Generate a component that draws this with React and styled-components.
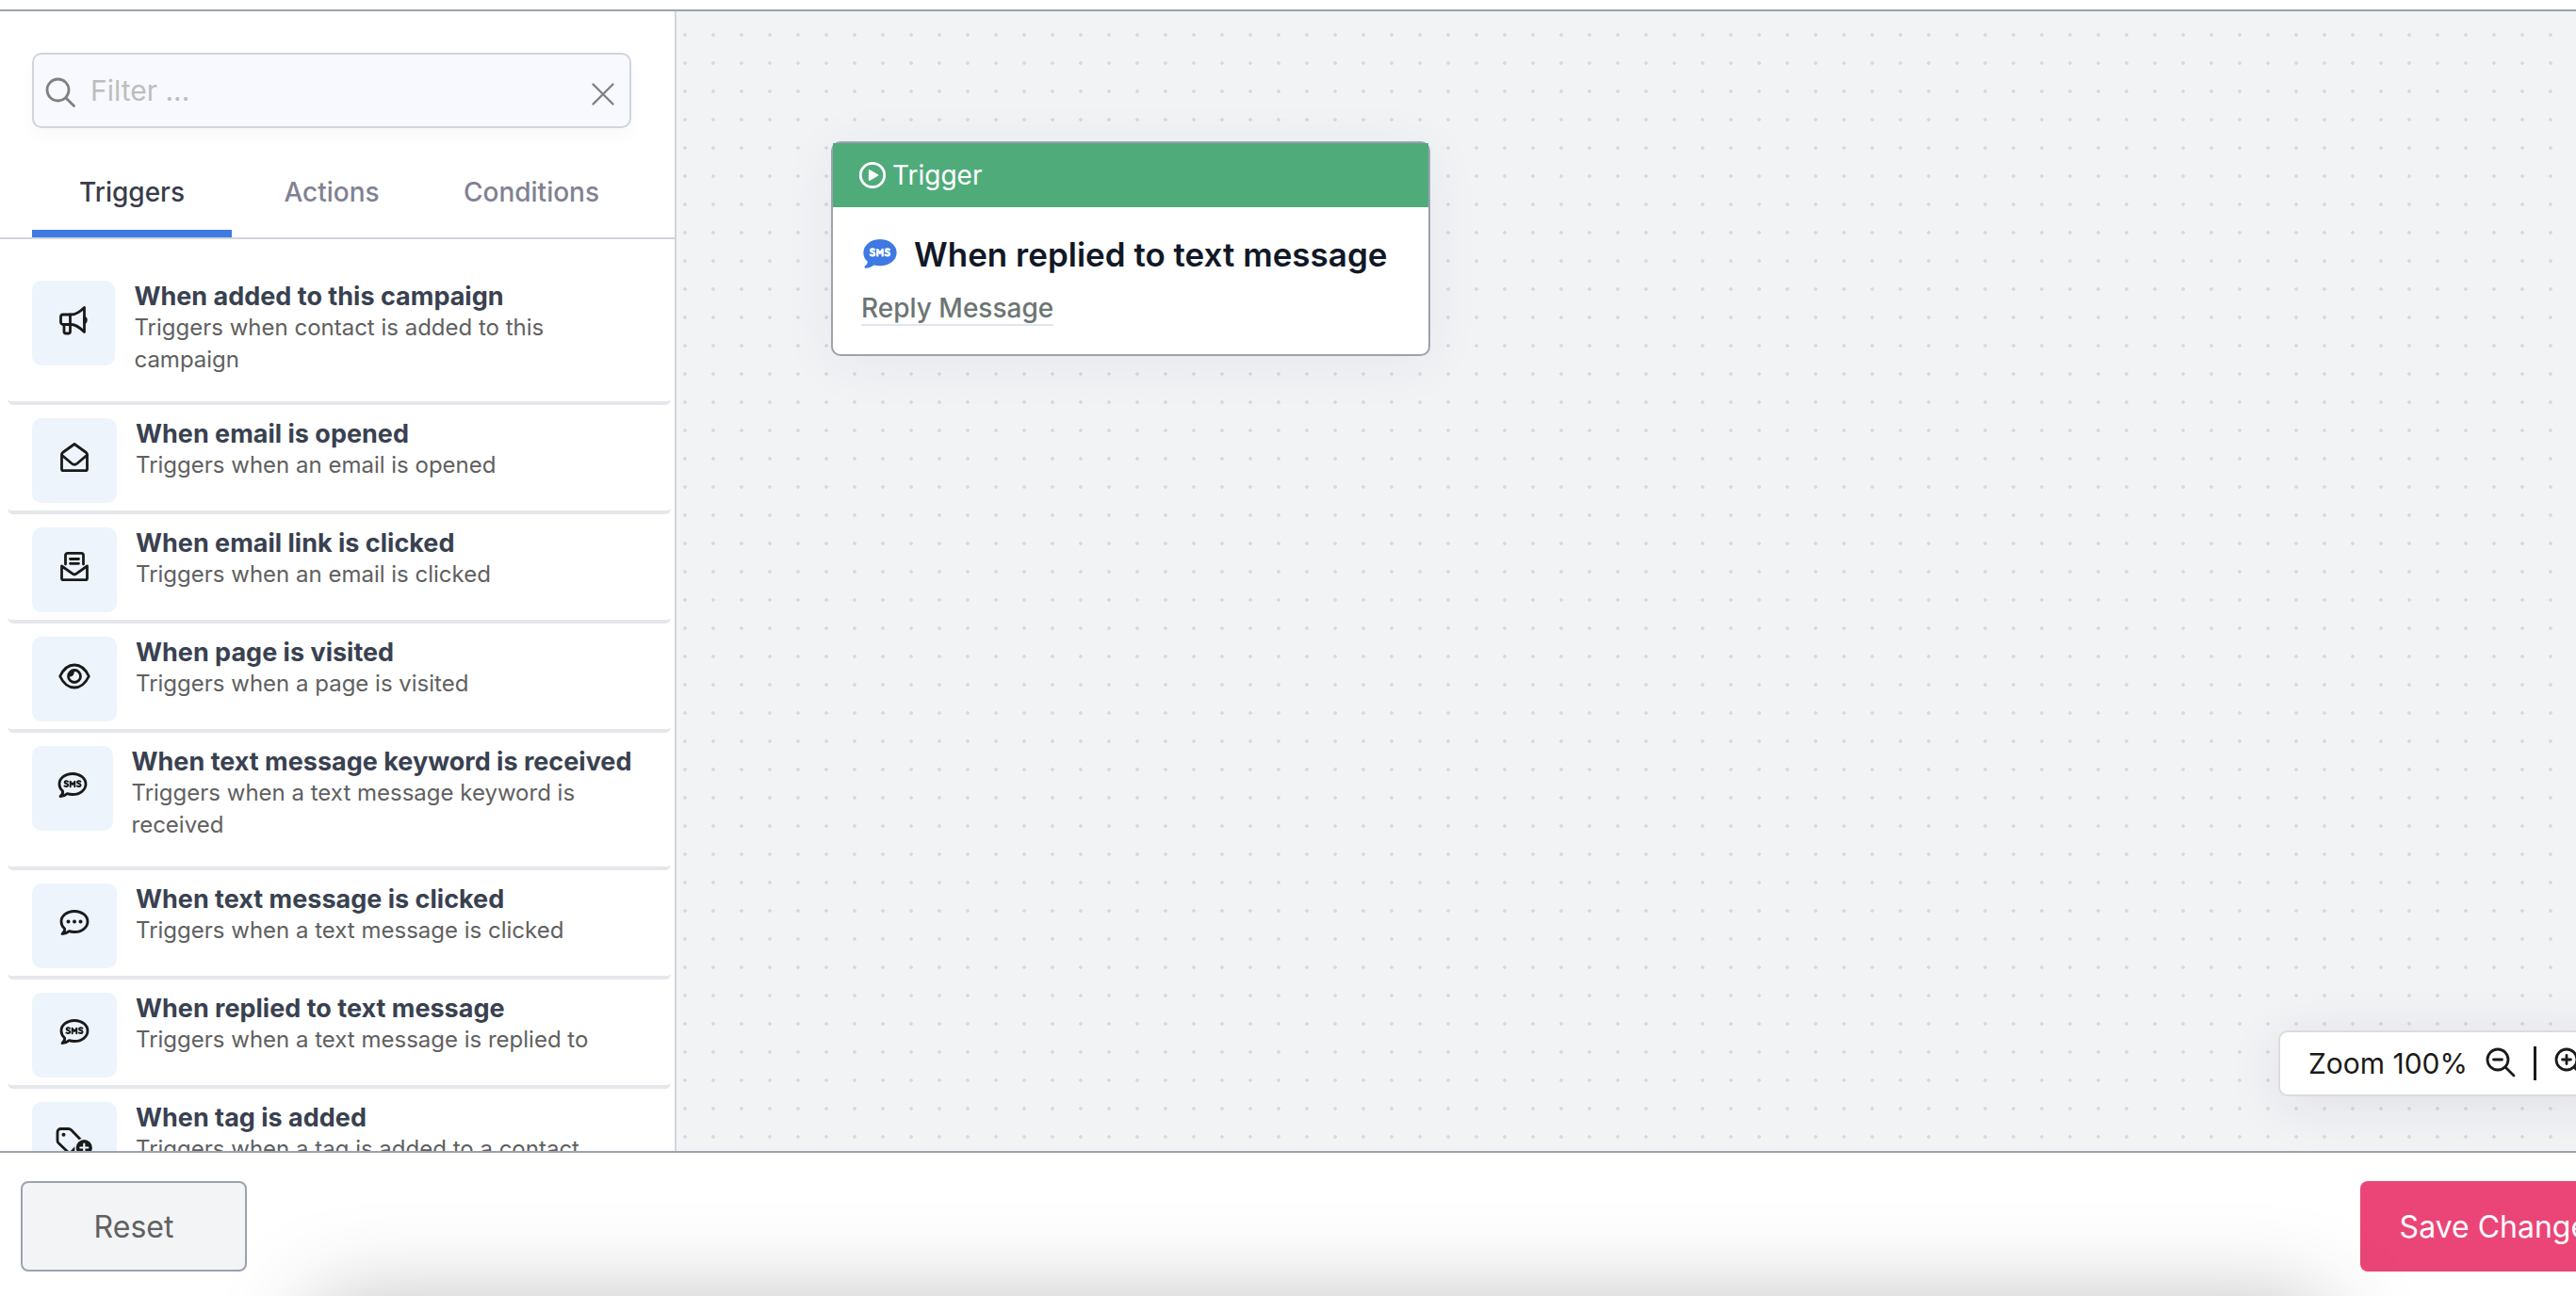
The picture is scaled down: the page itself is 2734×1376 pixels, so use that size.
import React, { useState } from 'react';
import styled, { createGlobalStyle, css } from 'styled-components';

const GlobalStyle = createGlobalStyle`
  *, *::before, *::after {
    box-sizing: border-box;
  }

  body {
    margin: 0;
    overflow: hidden;
    background: #fff;
    font-family: Inter, 'Liberation Sans', sans-serif;
  }

  button, input {
    font-family: inherit;
  }
`;

const Page = styled.div`
  display: flex;
  flex-direction: column;
  width: calc(100vw + 94px);
  height: 100vh;
  padding-top: 10px;
`;

const Workspace = styled.div`
  display: flex;
  flex: 1;
  min-height: 0;
  border-top: 2px solid #9ca3af;
  border-bottom: 2px solid #9ca3af;
`;

const Sidebar = styled.aside`
  display: flex;
  flex-direction: column;
  flex: none;
  width: 718px;
  border-right: 2px solid #d1d5db;
  overflow: hidden;
`;

const FilterBox = styled.label`
  display: flex;
  align-items: center;
  flex: none;
  height: 80px;
  margin: 44px 46px 0 34px;
  padding: 0 16px 0 12px;
  gap: 16px;
  border: 2px solid #d1d5db;
  border-radius: 10px;
  background: #f7f9fe;
  box-shadow: 0 8px 16px rgba(0, 0, 0, 0.03);
  color: #808080;

  > svg {
    margin-top: 4px;
  }
`;

const FilterInput = styled.input`
  flex: 1;
  min-width: 0;
  padding: 0;
  border: 0;
  outline: 0;
  background: transparent;
  color: #394150;
  font-size: 30px;

  &::placeholder {
    color: #bdbdbd;
    opacity: 1;
  }
`;

const ClearButton = styled.button`
  display: flex;
  padding: 8px 0 0;
  border: 0;
  background: transparent;
  color: #808080;
`;

const Tabs = styled.div`
  display: flex;
  flex: none;
  height: 118px;
  padding: 20px 46px 0 34px;
  border-bottom: 2px solid #d1d5db;
`;

const Tab = styled.button`
  flex: 1;
  padding: 8px 0 0;
  border: 0;
  border-bottom: 8px solid ${({ $active }) => ($active ? '#3f7ae3' : 'transparent')};
  background: transparent;
  color: ${({ $active }) => ($active ? '#393c4a' : '#808292')};
  font-size: 28px;
  font-weight: 500;
`;

const BlockList = styled.ul`
  flex: 1;
  min-height: 0;
  margin: 0;
  padding: 30px 4px 0 8px;
  overflow: hidden;
  list-style: none;
`;

const Block = styled.li`
  display: flex;
  align-items: flex-start;
  padding: 14px 26px 8px;
  border-bottom: 4px solid #e5e7eb;
  border-radius: 6px;
`;

const BlockIcon = styled.div`
  display: flex;
  justify-content: center;
  width: 90px;
  height: 90px;
  padding-top: 25px;
  border-radius: 10px;
  background: #edf4fc;
  color: #1a1a1a;
`;

const BlockText = styled.div`
  margin-left: 20px;
  padding-bottom: 19px;
`;

const BlockTitle = styled.h3`
  margin: 0;
  color: #394150;
  font-size: 27px;
  font-weight: 700;
  line-height: 33px;
`;

const BlockDescription = styled.p`
  margin: 0;
  color: #606060;
  font-size: 24px;
  line-height: 34px;
`;

const Canvas = styled.main`
  position: relative;
  flex: 1;
  overflow: hidden;
  background-color: #f2f3f5;
  background-image: radial-gradient(circle, #d9dbde 2px, transparent 2px);
  background-size: 30px 30px;
  background-position: -6px 10px;
`;

const Node = styled.article`
  position: absolute;
  top: 138px;
  left: 164px;
  border: 2px solid #9ca3af;
  border-radius: 10px;
  background: #fff;
  box-shadow: 0 8px 60px rgba(30, 50, 100, 0.06);
`;

const NodeHeader = styled.header`
  display: flex;
  align-items: center;
  gap: 6px;
  height: 68px;
  padding: 0 27px;
  background: #50ab7b;
  color: #fff;
  font-size: 28px;
`;

const NodeBody = styled.div`
  width: 632px;
  padding: 28px 30px 30px;
`;

const NodeTitle = styled.h2`
  display: flex;
  align-items: center;
  gap: 16px;
  margin: 0;
  color: #111827;
  font-size: 35px;
  font-weight: 600;
  line-height: 44px;
  white-space: nowrap;

  svg {
    flex: none;
    color: #3f7ae3;
  }
`;

const NodeLink = styled.a`
  display: inline-block;
  margin-top: 18px;
  border-bottom: 2px solid #e2e4f0;
  color: #6b7573;
  font-size: 28px;
  font-weight: 500;
  line-height: 34px;
  text-decoration: none;
`;

const ZoomBar = styled.div`
  position: absolute;
  right: 53px;
  bottom: 58px;
  display: flex;
  align-items: center;
  height: 70px;
  padding: 0 30px;
  gap: 19px;
  border: 2px solid #dcdcdc;
  border-radius: 10px;
  background: #fff;
  box-shadow: 0 8px 60px rgba(30, 30, 90, 0.09);
  color: #1a1a1a;
  font-size: 30px;
`;

const ZoomButton = styled.button`
  display: flex;
  padding: 0 0 2px;
  border: 0;
  background: transparent;
  color: inherit;
`;

const Divider = styled.span`
  width: 3px;
  height: 36px;
  background: #1a1a1a;
`;

const Footer = styled.footer`
  position: relative;
  display: flex;
  justify-content: space-between;
  flex: none;
  height: 152px;
  padding: 30px 22px 0;
  overflow: hidden;

  &::after {
    content: '';
    position: absolute;
    top: 100%;
    left: 335px;
    right: 363px;
    height: 300px;
    box-shadow: 0 10px 96px rgba(0, 0, 0, 0.28);
    pointer-events: none;
  }
`;

const footerButton = css`
  height: 96px;
  border-radius: 8px;
  font-size: 32px;
`;

const ResetButton = styled.button`
  ${footerButton}
  width: 240px;
  border: 2px solid #9ca3af;
  background: #f3f4f6;
  color: #606060;
`;

const SaveButton = styled.button`
  ${footerButton}
  padding: 0 42px;
  border: 0;
  background: #eb4577;
  color: #fff;
`;

const Icon = ({ size = 36, box = 16, children, ...rest }) => (
  <svg width={size} height={size} viewBox={`0 0 ${box} ${box}`} fill="none" stroke="currentColor" strokeLinecap="round" strokeLinejoin="round" aria-hidden="true" {...rest}>
    {children}
  </svg>
);

const BUBBLE = 'M4 28.500 C6 27 7 25 6.600 23 C4.200 21 3 18.400 3 15.500 C3 9.400 9 4.500 17 4.500 S31 9.400 31 15.500 S25 26.500 17 26.500 C15 26.500 13 26.200 11.400 25.600 C9.500 27.200 7 28.500 4 28.500Z';

// hand-drawn lettering strokes inside the speech bubble
const SmsMarks = ({ color = 'currentColor' }) => (
  <g stroke={color} strokeWidth="2">
    <path d="M12 12.800c-1-.8-3.400-.7-3.400.8 0 1.800 3.600 1.100 3.600 3.100 0 1.600-2.500 1.800-3.800.8" />
    <path d="M14.700 18.200v-5.400l2.300 3.200 2.300-3.200v5.400" />
    <path d="M25.400 12.800c-1-.8-3.400-.7-3.400.8 0 1.800 3.600 1.100 3.600 3.100 0 1.600-2.500 1.800-3.800.8" />
  </g>
);

const SmsIcon = () => (
  <Icon size={34} box={34}>
    <path d={BUBBLE} strokeWidth="2.800" />
    <SmsMarks />
  </Icon>
);

const SmsSolidIcon = () => (
  <Icon size={40} box={34}>
    <path d={BUBBLE} fill="currentColor" strokeWidth="2" />
    <SmsMarks color="#fff" />
  </Icon>
);

const ChatIcon = () => (
  <Icon size={34} box={34}>
    <path d={BUBBLE} strokeWidth="2.800" />
    <g fill="currentColor" stroke="none">
      <circle cx="10.500" cy="15.500" r="2" />
      <circle cx="17" cy="15.500" r="2" />
      <circle cx="23.500" cy="15.500" r="2" />
    </g>
  </Icon>
);

const MegaphoneIcon = () => (
  <Icon size={34} box={34} strokeWidth="2.800">
    <path d="M6 11h8.500c5.500 0 10-3.500 14-7.500v26c-4-4-8.500-8-14-8H6a2.500 2.500 0 0 1-2.500-2.500v-5.500A2.500 2.500 0 0 1 6 11Z" />
    <path d="M13.500 11v10.500M7 21.500V29a2 2 0 0 0 2 2h2.500a2 2 0 0 0 2-2v-7.500" />
    <path d="M28.500 14c2.400.6 2.400 5 0 5.600Z" fill="currentColor" />
  </Icon>
);

const MailOpenIcon = () => (
  <Icon size={34} box={34} strokeWidth="2.800">
    <path d="M3.500 13.500c0-.8.400-1.500 1-2L17 2.500l12.500 9c.6.500 1 1.200 1 2V29a1.700 1.700 0 0 1-1.700 1.700H5.200A1.700 1.700 0 0 1 3.500 29Z" />
    <path d="m4 14.500 10 8.500c2 1.700 4 1.700 6 0l10-8.500" />
  </Icon>
);

const MailTextIcon = () => (
  <Icon size={34} box={34} strokeWidth="2.800">
    <path d="M3.500 16v13a1.700 1.700 0 0 0 1.700 1.700h23.600a1.700 1.700 0 0 0 1.700-1.700V16L19 24.200c-1.300 1-2.700 1-4 0L3.500 16Z" />
    <path d="M7.500 14V4.500A2.200 2.200 0 0 1 9.700 2.300h14.600a2.200 2.200 0 0 1 2.200 2.200V14M12.500 8.500h9M12.500 13.300h9" />
  </Icon>
);

const EyeIcon = () => (
  <Icon size={34} box={34} strokeWidth="2.800">
    <path d="M1.700 17C5 10 10.500 5 17 5s12 5 15.300 12C29 24 23.500 29 17 29S5 24 1.700 17Z" />
    <circle cx="17" cy="17" r="6.500" />
    <path d="M17 10.500c-3 0-6 2.500-6.500 6.500 3.500 1.500 6.500-1 6.500-6.500Z" fill="currentColor" stroke="none" />
  </Icon>
);

const TagAddIcon = () => (
  <Icon size={40} box={40} strokeWidth="2.800">
    <path d="M2 7A3.500 3.500 0 0 1 5.500 3.500h8.300c1 0 2 .4 2.600 1.100L28 16.500 15 30 3 18.500c-.7-.7-1-1.600-1-2.500Z" />
    <circle cx="8.500" cy="9.800" r="2" fill="currentColor" stroke="none" />
    <circle cx="30.300" cy="23.500" r="9.300" fill="currentColor" stroke="#edf4fc" strokeWidth="1.500" />
    <path d="M30.300 19.500v8M26.300 23.500h8" stroke="#edf4fc" strokeWidth="2.200" />
  </Icon>
);

const SearchIcon = () => (
  <Icon size={32} box={32} strokeWidth="2.800">
    <circle cx="13.500" cy="13.500" r="11.500" />
    <path d="m22 22 8.500 8.500" />
  </Icon>
);

const CloseIcon = () => (
  <Icon size={24} box={24} strokeWidth="2.400">
    <path d="m1.500 1.500 21 21M22.500 1.500l-21 21" />
  </Icon>
);

const PlayIcon = () => (
  <Icon size={30} box={30} strokeWidth="2.800">
    <circle cx="15" cy="15" r="12.700" />
    <path d="M11.800 10v10l8.600-5Z" fill="currentColor" strokeWidth="1.800" />
  </Icon>
);

const MagnifierIcon = ({ plus }) => (
  <Icon size={32} box={32} strokeWidth="2.800">
    <circle cx="13" cy="13" r="11" />
    <path d="m21 21 9 9M8.500 13h9" />
    {plus && <path d="M13 8.500v9" />}
  </Icon>
);

const TABS = ['Triggers', 'Actions', 'Conditions'];

const TRIGGERS = [
  { title: 'When added to this campaign', description: 'Triggers when contact is added to this campaign', icon: MegaphoneIcon },
  { title: 'When email is opened', description: 'Triggers when an email is opened', icon: MailOpenIcon },
  { title: 'When email link is clicked', description: 'Triggers when an email is clicked', icon: MailTextIcon },
  { title: 'When page is visited', description: 'Triggers when a page is visited', icon: EyeIcon },
  { title: 'When text message keyword is received', description: 'Triggers when a text message keyword is received', icon: SmsIcon },
  { title: 'When text message is clicked', description: 'Triggers when a text message is clicked', icon: ChatIcon },
  { title: 'When replied to text message', description: 'Triggers when a text message is replied to', icon: SmsIcon },
  { title: 'When tag is added', description: 'Triggers when a tag is added to a contact', icon: TagAddIcon },
];

const App = () => {
  const [tab, setTab] = useState('Triggers');
  const [filter, setFilter] = useState('');

  return (
    <>
      <GlobalStyle />
      <Page>
        <Workspace>
          <Sidebar>
            <FilterBox>
              <SearchIcon />
              <FilterInput
                aria-label="Filter"
                placeholder="Filter ..."
                value={filter}
                onChange={(e) => setFilter(e.target.value)}
              />
              <ClearButton type="button" aria-label="Clear filter" onClick={() => setFilter('')}>
                <CloseIcon />
              </ClearButton>
            </FilterBox>
            <Tabs role="tablist">
              {TABS.map((name) => (
                <Tab key={name} type="button" role="tab" aria-selected={tab === name} $active={tab === name} onClick={() => setTab(name)}>
                  {name}
                </Tab>
              ))}
            </Tabs>
            <BlockList>
              {TRIGGERS.map(({ title, description, icon: TriggerIcon }) => (
                <Block key={title}>
                  <BlockIcon>
                    <TriggerIcon />
                  </BlockIcon>
                  <BlockText>
                    <BlockTitle>{title}</BlockTitle>
                    <BlockDescription>{description}</BlockDescription>
                  </BlockText>
                </Block>
              ))}
            </BlockList>
          </Sidebar>

          <Canvas>
            <Node>
              <NodeHeader>
                <PlayIcon />
                Trigger
              </NodeHeader>
              <NodeBody>
                <NodeTitle>
                  <SmsSolidIcon />
                  When replied to text message
                </NodeTitle>
                <NodeLink href="#reply">Reply Message</NodeLink>
              </NodeBody>
            </Node>
            <ZoomBar>
              Zoom 100%
              <ZoomButton type="button" aria-label="Zoom out">
                <MagnifierIcon />
              </ZoomButton>
              <Divider />
              <ZoomButton type="button" aria-label="Zoom in">
                <MagnifierIcon plus />
              </ZoomButton>
            </ZoomBar>
          </Canvas>
        </Workspace>

        <Footer>
          <ResetButton type="button">Reset</ResetButton>
          <SaveButton type="button">Save Changes</SaveButton>
        </Footer>
      </Page>
    </>
  );
};

export default App;
